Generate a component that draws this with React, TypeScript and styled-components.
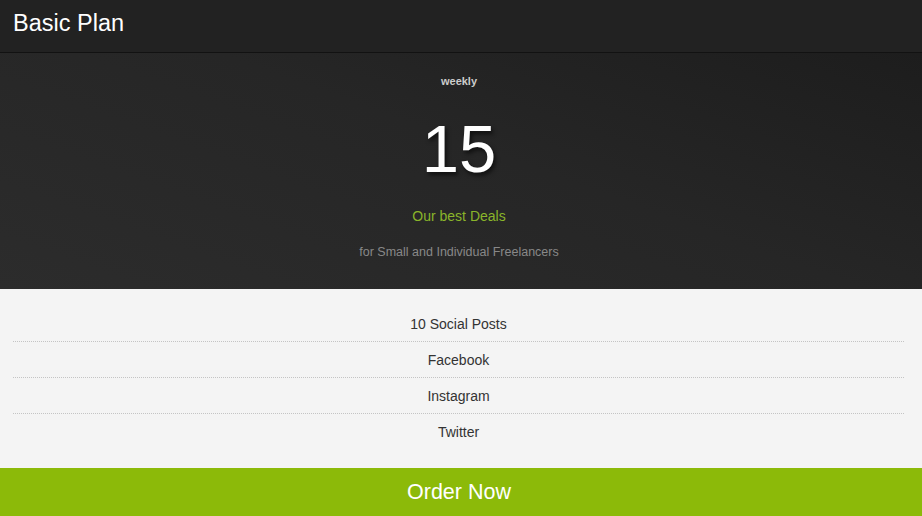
import React from "react";
import styled, { createGlobalStyle } from "styled-components";

const GlobalStyle = createGlobalStyle`
  html, body { margin: 0; padding: 0; background: #f4f4f4; }
  body { font-family: "Liberation Sans", Arial, sans-serif; }
  * { box-sizing: border-box; }
`;

const Card = styled.div`
  width: 922px;
  height: 516px;
  display: flex;
  flex-direction: column;
  overflow: hidden;
  font-family: "Liberation Sans", Arial, sans-serif;
`;

const Header = styled.header`
  height: 53px;
  flex: none;
  display: flex;
  align-items: center;
  padding: 0 13px 6px;
  background: #222222;
  border-bottom: 1px solid #121212;
`;

const Title = styled.h1`
  margin: 0;
  font-size: 23.5px;
  font-weight: normal;
  color: #ffffff;
  line-height: 28px;
`;

const Hero = styled.section`
  flex: none;
  height: 236px;
  display: flex;
  flex-direction: column;
  align-items: center;
  padding: 20px 4px 0 0;
  background: linear-gradient(200deg, #1d1d1d 0%, #262626 45%, #2c2c2c 100%);
`;

const Period = styled.div`
  font-size: 11px;
  font-weight: bold;
  line-height: 16px;
  color: #cccccc;
`;

const Price = styled.div`
  margin-top: 25px;
  font-size: 67px;
  line-height: 70px;
  color: #ffffff;
  text-shadow: 2px 3px 4px rgba(0, 0, 0, 0.6);
`;

const Tagline = styled.div`
  margin-top: 22px;
  font-size: 14px;
  line-height: 20px;
  color: #8ab52a;
`;

const Audience = styled.div`
  margin-top: 16px;
  font-size: 12.5px;
  line-height: 20px;
  color: #888888;
`;

const Features = styled.ul`
  flex: 1;
  margin: 0;
  list-style: none;
  padding: 17px 18px 18px 13px;
  background: #f4f4f4;
`;

const Feature = styled.li<{ $last?: boolean }>`
  height: ${(p) => (p.$last ? "35px" : "36px")};
  display: flex;
  align-items: center;
  justify-content: center;
  font-size: 14px;
  color: #333333;
  border-bottom: ${(p) => (p.$last ? "none" : "1px dotted #c4c4c4")};
`;

const OrderButton = styled.button`
  flex: none;
  height: 48px;
  width: 100%;
  border: none;
  margin: 0;
  padding: 1px 4px 0 0;
  background: #8cba09;
  color: #ffffff;
  font-family: "Liberation Sans", Arial, sans-serif;
  font-size: 21.5px;
  cursor: pointer;
`;

const features = ["10 Social Posts", "Facebook", "Instagram", "Twitter"];

export default function App() {
  return (
    <>
      <GlobalStyle />
      <Card>
        <Header>
          <Title>Basic Plan</Title>
        </Header>
        <Hero>
          <Period>weekly</Period>
          <Price>15</Price>
          <Tagline>Our best Deals</Tagline>
          <Audience>for Small and Individual Freelancers</Audience>
        </Hero>
        <Features>
          {features.map((f, i) => (
            <Feature key={f} $last={i === features.length - 1}>
              {f}
            </Feature>
          ))}
        </Features>
        <OrderButton>Order Now</OrderButton>
      </Card>
    </>
  );
}
